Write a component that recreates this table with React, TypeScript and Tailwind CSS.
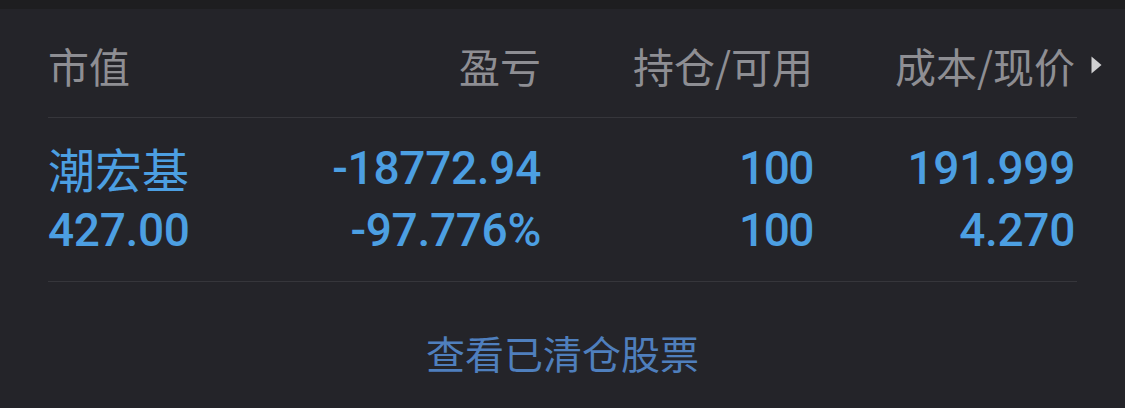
import React from "react";

const CJK = '"Noto Sans CJK SC", "Noto Sans", sans-serif';
const NUM = 'Roboto, "Noto Sans CJK SC", sans-serif';

export default function App() {
  return (
    <div className="w-[1125px] h-[408px] bg-[#242429] flex flex-col overflow-hidden">
      <div className="h-[9px] bg-[#1e1e20] shrink-0" />
      <div className="pl-[48px] pr-[48px]">
        {/* header */}
        <div
          className="h-[108px] grid grid-cols-[220px_273px_272px_262px] items-center pt-[4px] text-[41px] leading-[40px] text-[#8e8e93]"
          style={{ fontFamily: CJK }}
        >
          <div>市值</div>
          <div className="text-right">盈亏</div>
          <div className="text-right">持仓/可用</div>
          <div className="text-right relative">
            成本/现价
            <svg
              className="absolute left-[calc(100%+16px)] top-[11px]"
              width="11"
              height="18"
              viewBox="0 0 11 18"
            >
              <path d="M0.5 0.5 L10.5 9 L0.5 17.5 Z" fill="#d0d0d2" />
            </svg>
          </div>
        </div>
        <div className="h-px bg-[#36363b] w-[1029px]" />
        {/* rows */}
        <div
          className="grid grid-cols-[220px_273px_272px_262px] pt-[19px] pb-[20px] text-[46px] leading-[62px] font-medium text-[#4c9fe2]"
          style={{ fontFamily: NUM }}
        >
          <div className="text-[47px] font-normal" style={{ fontFamily: CJK }}>潮宏基</div>
          <div className="text-right tracking-[-0.3px]">-18772.94</div>
          <div className="text-right tracking-[-1.5px]">100</div>
          <div className="text-right tracking-[-0.3px]">191.999</div>
          <div className="tracking-[-0.3px]">427.00</div>
          <div className="text-right tracking-[-0.3px]">-97.776%</div>
          <div className="text-right tracking-[-1.5px]">100</div>
          <div className="text-right tracking-[-0.3px]">4.270</div>
        </div>
        <div className="h-px bg-[#36363b] w-[1029px]" />
      </div>
      <div
        className="pt-[50px] text-center text-[39px] leading-[40px] text-[#4f7fbd]"
        style={{ fontFamily: CJK }}
      >
        查看已清仓股票
      </div>
    </div>
  );
}
